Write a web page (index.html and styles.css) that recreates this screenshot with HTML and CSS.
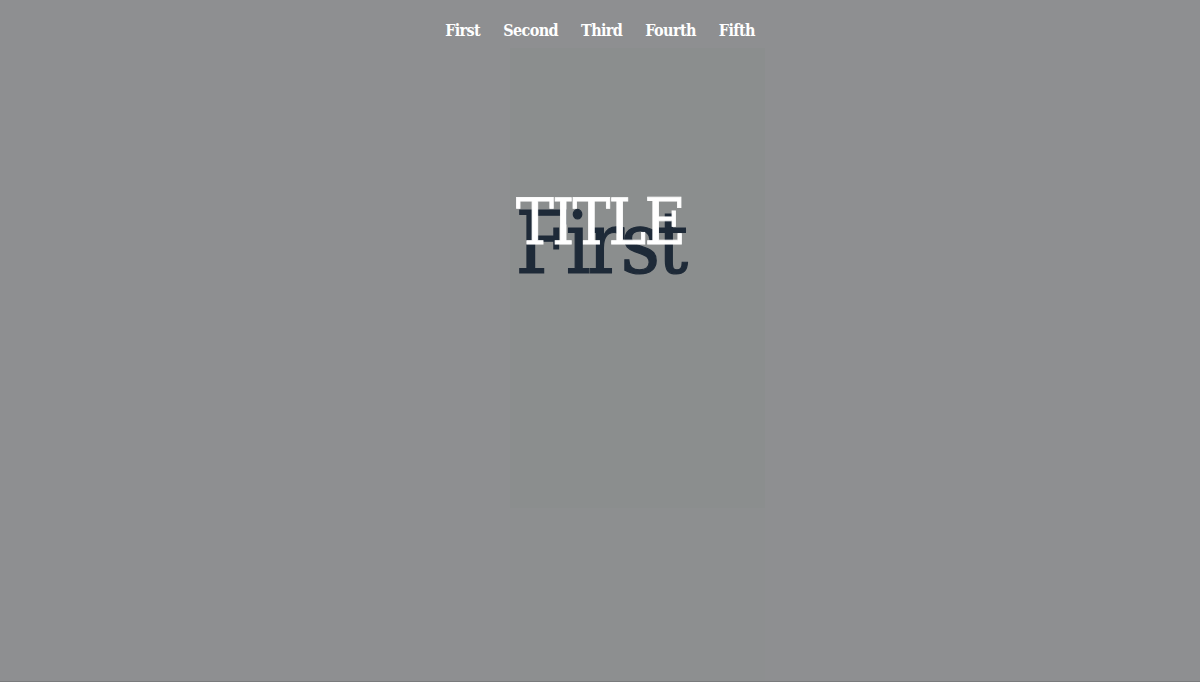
FILE: index.html
```html
<!DOCTYPE html>
<html lang="en">
<head>
<meta charset="utf-8">
<title>Slides</title>
<link rel="stylesheet" href="styles.css">
</head>
<body>
<div class="page">
  <nav class="nav">
    <a class="nav-item" href="#">First</a>
    <a class="nav-item" href="#">Second</a>
    <a class="nav-item" href="#">Third</a>
    <a class="nav-item" href="#">Fourth</a>
    <a class="nav-item" href="#">Fifth</a>
  </nav>
  <div class="column">
    <div class="column-top"></div>
    <div class="column-bottom"></div>
  </div>
  <div class="hero">
    <h2 class="slide-name">First</h2>
    <h1 class="title">TITLE</h1>
  </div>
</div>
</body>
</html>
```
FILE: styles.css
```css
html, body {
  margin: 0;
  padding: 0;
  height: 100%;
}
body {
  background: #8e8f91;
  font-family: "DejaVu Serif Condensed", "DejaVu Serif", "Liberation Serif", serif;
  font-stretch: semi-condensed;
  overflow: hidden;
}
.page {
  position: relative;
  height: 682px;
  border-bottom: 1px solid #7a7b7d;
  box-sizing: border-box;
}
.nav {
  display: flex;
  justify-content: center;
  gap: 23px;
  padding-top: 20px;
  position: relative;
  z-index: 3;
}
.nav-item {
  color: #ffffff;
  text-decoration: none;
  font-weight: bold;
  font-size: 16px;
  letter-spacing: -0.6px;
  line-height: 22px;
}
.column {
  position: absolute;
  left: 510px;
  top: 48px;
  width: 255px;
  bottom: 0;
  display: flex;
  flex-direction: column;
}
.column-top {
  height: 460px;
  background: #8b8e8e;
}
.column-bottom {
  flex: 1;
  background: #8d8f90;
}
.hero {
  position: absolute;
  left: 0;
  right: 0;
  top: 180px;
  display: flex;
  justify-content: center;
}
.slide-name {
  margin: 0;
  color: #1e2a38;
  font-weight: normal;
  font-size: 86px;
  line-height: 100px;
  letter-spacing: -3.4px;
  -webkit-text-stroke: 1.2px #1e2a38;
  position: relative;
  top: 13px;
}
.title {
  position: absolute;
  top: 3px;
  left: 0;
  right: 0;
  margin: 0;
  text-align: center;
  color: #ffffff;
  font-weight: normal;
  font-size: 63px;
  line-height: 80px;
  letter-spacing: -1.8px;
  -webkit-text-stroke: 0.8px #ffffff;
}
```
